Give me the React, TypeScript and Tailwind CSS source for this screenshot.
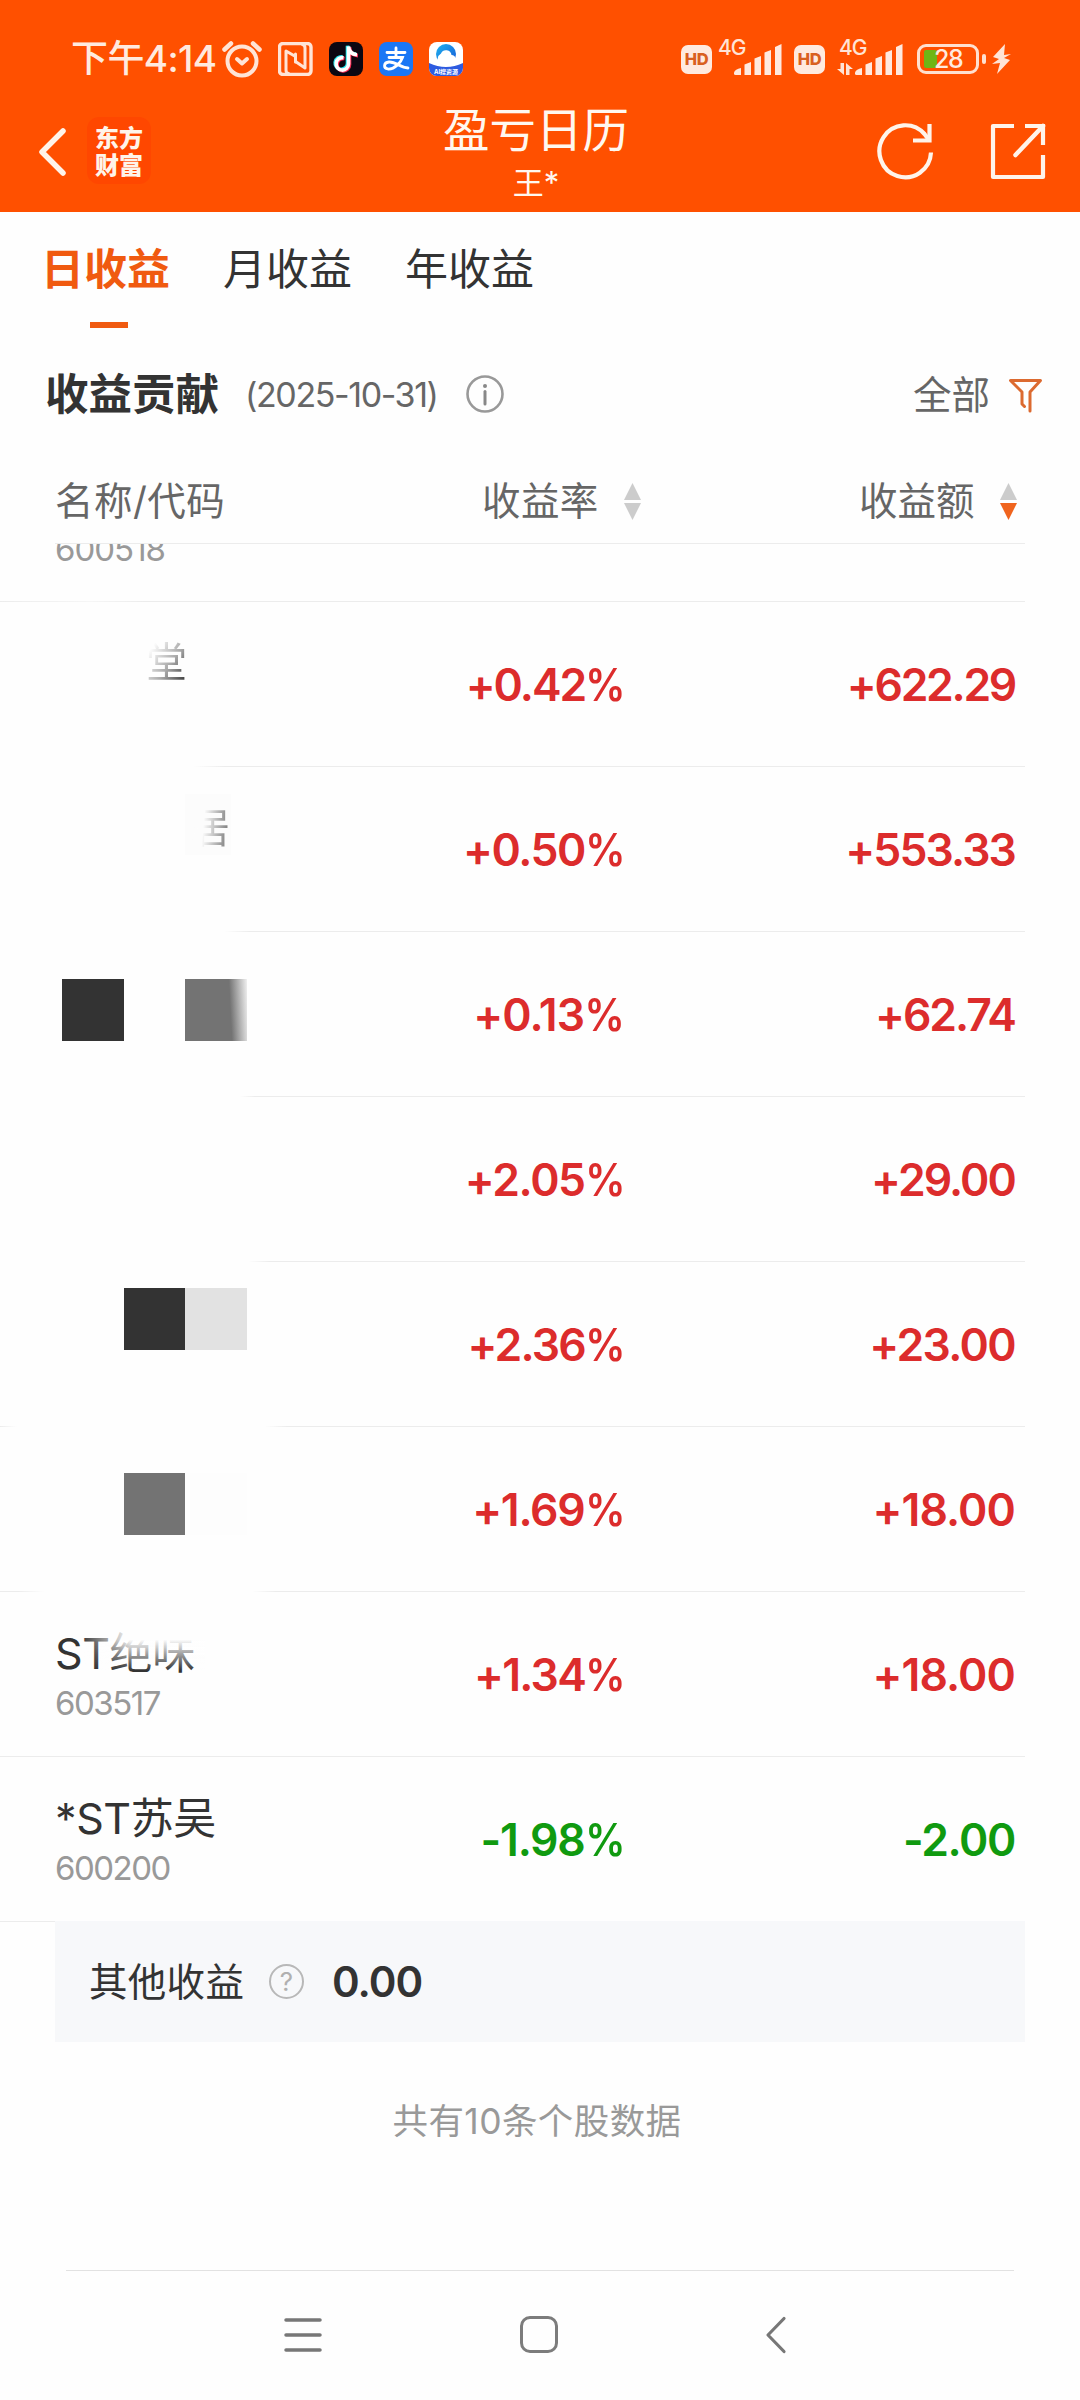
import React from "react";

const CJK = "font-['Inter','Noto_Sans_CJK_SC',sans-serif]";

type Row = {
  rate: string;
  amount: string;
  tone: string;
  rateTrack: string;
  amountTrack: string;
  line: string;
  name?: React.ReactNode;
};

function StockName({ name, code, faded }: { name: string; code: string; faded?: boolean }) {
  return (
    <div className="relative pl-[55px] pt-[33px]">
      <div className="h-[57px] whitespace-nowrap text-[43px] leading-[56px] tracking-[-0.4px] text-[#333]">{name}</div>
      <div className="h-[42px] whitespace-nowrap text-[33px] leading-[42px] tracking-[-1.500px] text-[#999]">{code}</div>
      {faded && (
        <div className="absolute left-[80px] top-[32px] h-[52px] w-[125px] bg-[linear-gradient(180deg,#fefefe_30%,#fefefe00_90%)] [mask-image:linear-gradient(90deg,#0000_0%,#000_40%)]" />
      )}
    </div>
  );
}

function Blocks({ a, b, top }: { top: string; a: string; b: string }) {
  return (
    <div className={`ml-[124px] flex ${top}`}>
      <div className={`h-[62px] w-[61px] ${a}`} />
      <div className={`h-[62px] w-[62px] ${b}`} />
    </div>
  );
}

const RED = "text-[#dc2c2c]";
const GREEN = "text-[#109a10]";

const rows: Row[] = [
  {
    rate: "+0.42", amount: "+622.29", tone: RED, rateTrack: "tracking-[-2px]", amountTrack: "tracking-[-2.3px]",
    line: "bg-[linear-gradient(90deg,#fefefe_193px,#ececec_225px)]",
    name: (
      <div className="ml-[146px] mt-[32px] w-[43px] bg-[linear-gradient(125deg,#fefefe_18%,#aaa_55%,#444_85%)] bg-clip-text text-[41px] leading-[56px] text-transparent">堂</div>
    ),
  },
  {
    rate: "+0.50", amount: "+553.33", tone: RED, rateTrack: "tracking-[-1.5px]", amountTrack: "tracking-[-1.9px]",
    line: "bg-[linear-gradient(90deg,#fefefe_224px,#ececec_250px)]",
    name: (
      <div className="ml-[185px] mt-[27px] h-[61px] w-[46px] bg-[#fcfcfc]">
        <div className="ml-[4px] w-[43px] bg-[linear-gradient(95deg,#fcfcfc_35%,#555_105%)] bg-clip-text pt-[6px] text-[41px] leading-[56px] text-transparent">居</div>
      </div>
    ),
  },
  {
    rate: "+0.13", amount: "+62.74", tone: RED, rateTrack: "tracking-[-0.9px]", amountTrack: "tracking-[-2px]",
    line: "bg-[linear-gradient(90deg,#fefefe_240px,#ececec_255px)]",
    name: (
      <div className="ml-[62px] mt-[47px] flex gap-[61px]">
        <div className="h-[62px] w-[62px] bg-[#333]" />
        <div className="h-[62px] w-[62px] bg-[linear-gradient(87deg,#737373_72%,#f0f0f0_100%)]" />
      </div>
    ),
  },
  {
    rate: "+2.05", amount: "+29.00", tone: RED, rateTrack: "tracking-[-1.4px]", amountTrack: "tracking-[-1.9px]",
    line: "bg-[linear-gradient(90deg,#fefefe_248px,#ececec_270px)]",
  },
  {
    rate: "+2.36", amount: "+23.00", tone: RED, rateTrack: "tracking-[-1.75px]", amountTrack: "tracking-[-1.65px]",
    line: "bg-[linear-gradient(90deg,#ececec_0px,#fefefe_17px,#fefefe_265px,#ececec_287px)]",
    name: <Blocks top="mt-[26px]" a="bg-[#333]" b="bg-[#e2e2e2]" />,
  },
  {
    rate: "+1.69", amount: "+18.00", tone: RED, rateTrack: "tracking-[-1.25px]", amountTrack: "tracking-[-0.9px]",
    line: "bg-[linear-gradient(90deg,#ececec_18px,#fefefe_44px,#fefefe_252px,#ececec_276px)]",
    name: <Blocks top="mt-[46px]" a="bg-[#737373]" b="bg-[#fdfdfd]" />,
  },
  {
    rate: "+1.34", amount: "+18.00", tone: RED, rateTrack: "tracking-[-1.75px]", amountTrack: "tracking-[-0.9px]",
    line: "bg-[#ececec]",
    name: <StockName name="ST绝味" code="603517" faded />,
  },
  {
    rate: "-1.98", amount: "-2.00", tone: GREEN, rateTrack: "tracking-[-1.25px]", amountTrack: "tracking-[-1.4px]",
    line: "bg-[#ececec]",
    name: <StockName name="*ST苏吴" code="600200" />,
  },
];

function Signal() {
  return (
    <svg width="48" height="32" viewBox="0 0 48 32" fill="#ffe9df">
      <path d="M0 28.500Q1 25 7 24V31H1.500Q0 31 0 29.500Z" />
      <path d="M10.500 20.500 17 18V31H10.500Z" />
      <path d="M20.500 14.500 27 12V31H20.500Z" />
      <path d="M30.500 8.500 37 6V31H30.500Z" />
      <path d="M41 3 47.500 0V31H41Z" />
    </svg>
  );
}

function HdBadge() {
  return (
    <div className="flex h-[29px] w-[31px] items-center justify-center rounded-[7px] bg-[#ffeadf] text-[16.500px] font-extrabold leading-none tracking-[-0.5px] text-[#d9601f]">
      HD
    </div>
  );
}

function StatusBar() {
  return (
    <div className="flex h-[90px] items-start pl-[71px]">
      <div className="mt-[38px] flex h-[42px] w-[150px] items-center whitespace-nowrap text-[37px] font-medium leading-[42px] tracking-[-0.6px] text-[#ffeadf]">
        下午4:14
      </div>
      <svg className="ml-[1px] mt-[40px]" width="40" height="38" viewBox="0 0 40 38" fill="none" stroke="#ffe4d6" strokeWidth="4" strokeLinecap="round" strokeLinejoin="round">
        <circle cx="20" cy="21" r="14.500" />
        <path d="M2.500 9.500 9 3.500M37.500 9.500 31 3.500" strokeWidth="4.500" />
        <path d="M15 19 20 23.500 25 19" />
      </svg>
      <svg className="ml-[16px] mt-[42px]" width="35" height="34" viewBox="0 0 35 34" fill="none" stroke="#ffe4d6" strokeWidth="3" strokeLinejoin="round" strokeLinecap="round">
        <rect x="1.500" y="1.500" width="31.500" height="31" rx="3.500" strokeWidth="3.400" />
        <path d="M24.500 2.500Q27 3 27 6V26L17.500 19.500V12" />
        <path d="M10.500 31.500Q8 31 8 28V9L17.500 14.500V20" />
      </svg>
      <svg className="ml-[16px] mt-[42px]" width="34" height="34" viewBox="0 0 34 34" fill="none" strokeWidth="3.600">
        <rect width="34" height="34" rx="8" fill="#0c0712" />
        <path d="M14.500 15.800A6.200 6.200 0 1 0 19.500 22V4.500C20 9.500 23 12.500 28 12.800" stroke="#25e5ec" transform="translate(-1 -.8)" />
        <path d="M14.500 15.800A6.200 6.200 0 1 0 19.500 22V4.500C20 9.500 23 12.500 28 12.800" stroke="#fb2c56" transform="translate(1 .8)" />
        <path d="M14.500 15.800A6.200 6.200 0 1 0 19.500 22V4.500C20 9.500 23 12.500 28 12.800" stroke="#fff" />
      </svg>
      <svg className="ml-[16px] mt-[42px]" width="34" height="34" viewBox="0 0 34 34" fill="none" stroke="#fff" strokeWidth="2.800" strokeLinecap="round">
        <rect width="34" height="34" rx="8" fill="#1b77f5" stroke="none" />
        <path d="M8 10.500H26M17 6V15M10 15.500H23.500C22 20 16 27.500 9 27C4 26 4.500 20.500 10 20C17 19.500 21 25.500 29 26" />
      </svg>
      <svg className="ml-[16px] mt-[42px]" width="34" height="34" viewBox="0 0 34 34">
        <defs>
          <clipPath id="qb"><rect width="34" height="34" rx="8" /></clipPath>
          <linearGradient id="ring" x1="0" y1="0" x2="1" y2="1">
            <stop offset="0" stopColor="#1fb3ee" />
            <stop offset="1" stopColor="#1758d8" />
          </linearGradient>
        </defs>
        <g clipPath="url(#qb)">
          <rect width="34" height="34" fill="#fff" />
          <path d="M0 21Q17 29 34 21V34H0Z" fill="#2d5be0" />
          <circle cx="17" cy="12" r="10" fill="url(#ring)" />
          <path d="M10.500 22A6.800 6.800 0 0 1 12 11.500A5.500 5.500 0 0 1 22.500 13A5 5 0 0 1 25 22Q17 25 10.500 22Z" fill="#fff" />
          <text x="17" y="32" textAnchor="middle" fontSize="6" fontWeight="700" fill="#fff">AI搜资源</text>
        </g>
      </svg>
      <div className="ml-[218px] mt-[45px]"><HdBadge /></div>
      <div className="ml-[6px] mt-[39px] w-[16px] whitespace-nowrap text-[21px] font-medium leading-[18px] tracking-[-1px] text-[#ffe4d6]">4G</div>
      <div className="mt-[44px]"><Signal /></div>
      <div className="ml-[12px] mt-[45px]"><HdBadge /></div>
      <div className="ml-[12px] mt-[39px] w-[18px]">
        <div className="ml-[2px] whitespace-nowrap text-[21px] font-medium leading-[18px] tracking-[-1px] text-[#ffe4d6]">4G</div>
        <svg className="mt-[6px]" width="16" height="12" viewBox="0 0 16 12" fill="#ffe4d6">
          <path d="M7 0V12L0 6H3.500V0ZM9 12V0L16 6H12.500V12Z" />
        </svg>
      </div>
      <div className="mt-[44px]"><Signal /></div>
      <div className="relative ml-[14px] mt-[44px] flex h-[30px] w-[62px] items-center rounded-[9px] border-[3px] border-[#ffe0cf] pl-[4px]">
        <div className="h-[18px] w-[13px] rounded-[2px] bg-[#6fb515]" />
        <div className="absolute left-[14px] top-[1px] text-[25px] font-medium leading-[23px] tracking-[-1.500px] text-[#ffeadf]">28</div>
      </div>
      <div className="ml-[3px] mt-[54px] h-[10px] w-[4px] rounded-[2px] bg-[#ffe0cf]" />
      <svg className="ml-[6px] mt-[44px]" width="19" height="30" viewBox="0 0 19 30" fill="#ffe4d6">
        <path d="M13 0 1 13 7 15 0 20 8 19 5 30 18 16 12 14 19 10 12 11Z" />
      </svg>
    </div>
  );
}

function TitleBar() {
  return (
    <div className="flex h-[122px] items-start">
      <svg className="ml-[38px] mt-[37px]" width="30" height="50" viewBox="0 0 30 50" fill="none" stroke="#fff4ea" strokeWidth="5.500" strokeLinecap="round" strokeLinejoin="round">
        <path d="M25 4 4 25 25 46" />
      </svg>
      <div className="ml-[19px] mt-[27px] h-[67px] w-[64px] rounded-[12px] bg-[#ff4700] pt-[8px] text-center text-[24px] font-black leading-[27px] text-[#fff4ea]">
        东方<br />财富
      </div>
      <div className="ml-[291px] w-[188px] text-center text-[#fff8f0]">
        <div className="mt-[7px] whitespace-nowrap text-[46.500px] leading-[66px]">盈亏日历</div>
        <div className="-mt-[2px] text-[31px] leading-[44px]">王*</div>
      </div>
      <svg className="ml-[245px] mt-[31px]" width="62" height="60" viewBox="0 0 62 60" fill="none" stroke="#fff4ea" strokeWidth="4.200">
        <path d="M56 31.500A25.800 26 0 1 1 49.500 13L54 19" />
        <path d="M54.500 3V19.500H38" strokeLinejoin="miter" />
      </svg>
      <svg className="ml-[50px] mt-[31px]" width="60" height="60" viewBox="0 0 60 60" fill="none" stroke="#fff4ea" strokeWidth="4.200" strokeLinejoin="round">
        <path d="M27 5H6V56H56V34" />
        <path d="M38 5H56V24" strokeLinejoin="miter" />
        <path d="M56 5 28.500 34" strokeWidth="4.500" strokeLinecap="round" />
      </svg>
    </div>
  );
}

function Sort({ active }: { active?: boolean }) {
  return (
    <svg width="17" height="37" viewBox="0 0 17 37">
      <path d="M8.500 0 17 17H0Z" fill="#ccc" />
      <path d="M8.500 37 17 20H0Z" fill={active ? "#f0641e" : "#ccc"} />
    </svg>
  );
}

export default function App() {
  return (
    <div className={`flex h-[2400px] w-[1080px] flex-col overflow-hidden bg-[#fefefe] ${CJK}`}>
      <header className="h-[212px] bg-[#ff5000]">
        <StatusBar />
        <TitleBar />
      </header>

      <nav className="flex h-[116px] gap-[53px] pl-[41px] pt-[25px] text-[43px] leading-[64px] text-[#333]">
        <div className="flex w-[129px] flex-col items-center font-bold text-[#f05a10]">
          日收益
          <div className="ml-[6px] mt-[21px] h-[6px] w-[38px] bg-[#f05a10]" />
        </div>
        <div className="w-[129px]">月收益</div>
        <div className="w-[129px]">年收益</div>
      </nav>

      <div className="flex h-[132px] items-center pb-[1px] pl-[45px]">
        <div className="w-[200px] whitespace-nowrap text-[43.500px] font-bold leading-[64px] text-[#333]">收益贡献</div>
        <div className="w-[221px] whitespace-nowrap pt-[2px] text-[34px] leading-[44px] tracking-[-1.4px] text-[#666]">(2025-10-31)</div>
        <svg width="38" height="38" viewBox="0 0 38 38" fill="none" stroke="#999" strokeWidth="2.600">
          <circle cx="19" cy="19" r="17.500" />
          <path d="M19 16.500V29" stroke="#888" strokeWidth="3" strokeLinecap="round" />
          <circle cx="19" cy="11" r="2" fill="#888" stroke="none" />
        </svg>
        <div className="ml-[409px] w-[96px] pt-[2px] text-[38.500px] leading-[60px] text-[#666]">全部</div>
        <svg className="mt-[4px]" width="34" height="35" viewBox="0 0 34 35" fill="none" stroke="#dc6a30" strokeWidth="3" strokeLinecap="round" strokeLinejoin="round">
          <path d="M15.500 28.500 13 26V14L1.500 2.500H31.500L21 14V33" />
        </svg>
      </div>

      <div className="flex h-[83px] items-center pl-[55px] text-[38.500px] leading-[60px] text-[#666]">
        <div className="-mt-[2px] w-[427px] tracking-[0.5px]">名称/代码</div>
        <div className="-mt-[2px] w-[142px] tracking-[0.4px]">收益率</div>
        <Sort />
        <div className="-mt-[2px] ml-[218px] w-[141px]">收益额</div>
        <Sort active />
      </div>

      <div className="ml-[55px] h-[1px] w-[970px] bg-[#ececec]" />
      <div className="h-[57px] overflow-hidden">
        <div className="-mt-[16px] ml-[55px] text-[33px] leading-[42px] tracking-[-1px] text-[#999]">600518</div>
      </div>
      <div className="h-[1px] w-[1025px] bg-[linear-gradient(90deg,#ececec_0px,#f6f6f6_90px,#ececec_145px)]" />

      {rows.map((r, i) => (
        <div key={i} className="flex h-[165px] w-[1025px] flex-col">
          <div className="flex h-[164px]">
            <div className="w-[300px]">{r.name}</div>
            <div className={`w-[324px] pt-[51px] text-right text-[44.500px] font-semibold leading-[64px] ${r.rateTrack} ${r.tone}`}>
              {r.rate}
              <span className="-ml-[4px] inline-block origin-right scale-x-90">%</span>
            </div>
            <div className={`w-[391px] pt-[51px] text-right text-[44.500px] font-semibold leading-[64px] ${r.amountTrack} ${r.tone}`}>{r.amount}</div>
          </div>
          <div className={`h-[1px] ${r.line}`} />
        </div>
      ))}

      <div className="-mt-[1px] ml-[55px] flex h-[121px] w-[970px] items-center bg-[#f7f8fa] pl-[34px] text-[#333]">
        <div className="w-[180px] text-[38.500px] leading-[60px] tracking-[0.3px]">其他收益</div>
        <div className="flex h-[35px] w-[35px] items-center justify-center rounded-full border-[2px] border-[#b8b8b8] text-[26px] leading-none text-[#b0b0b0]">?</div>
        <div className="ml-[28px] pt-[1px] text-[42px] font-semibold leading-[60px] tracking-[-1px]">0.00</div>
      </div>

      <div className="mt-[50px] h-[60px] pr-[6px] text-center text-[35.500px] leading-[60px] tracking-[0.4px] text-[#999]">共有10条个股数据</div>

      <div className="mx-[66px] mt-[118px] h-[1px] bg-[#e2e2e2]" />
      <footer className="flex pt-[44px]">
        <svg className="ml-[284px]" width="38" height="40" viewBox="0 0 38 40" stroke="#777" strokeWidth="3.500" strokeLinecap="round">
          <path d="M2 5H36M2 20H36M2 35H36" />
        </svg>
        <div className="ml-[198px] mt-[1px] h-[37px] w-[38px] rounded-[10px] border-[3.500px] border-[#7c7c7c]" />
        <svg className="ml-[206px]" width="24" height="40" viewBox="0 0 24 40" fill="none" stroke="#777" strokeWidth="3.200" strokeLinecap="round" strokeLinejoin="round">
          <path d="M20 3.500 4 20 20 36.500" />
        </svg>
      </footer>
    </div>
  );
}
